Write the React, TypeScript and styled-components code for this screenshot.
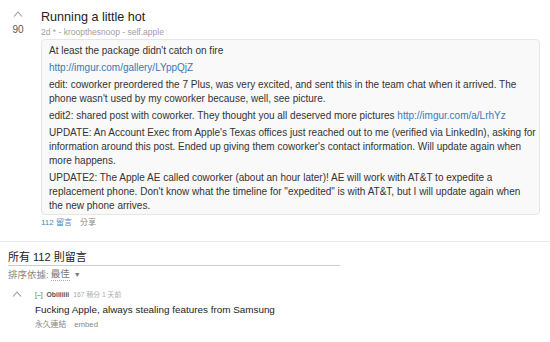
import React from "react";
import styled, { createGlobalStyle } from "styled-components";

const Global = createGlobalStyle`
  html, body { margin: 0; padding: 0; background: #fff; }
  body { font-family: "Liberation Sans", Arial, "Noto Sans CJK TC", sans-serif; color: #222; }
`;

const Page = styled.div`
  width: 550px;
  height: 342px;
  overflow: hidden;
  background: #fff;
`;

const Post = styled.div`
  display: grid;
  grid-template-columns: 24px 1fr;
  column-gap: 11px;
  padding: 9px 10px 0 6px;
`;

const Vote = styled.div`
  display: flex;
  flex-direction: column;
  align-items: center;
  padding-top: 2px;
`;

const Arrow = styled.svg`
  display: block;
  width: 10px;
  height: 6px;
`;

const Score = styled.div`
  font-size: 10px;
  color: #555;
  margin-top: 7px;
`;

const Content = styled.div`
  display: flex;
  flex-direction: column;
`;

const Title = styled.div`
  font-size: 12.6px;
  line-height: 16px;
  color: #222;
`;

const Meta = styled.div`
  font-size: 8.5px;
  line-height: 10px;
  color: #a0a0a0;
  margin-top: 2px;
`;

const Body = styled.div`
  margin-top: 2px;
  background: #f9f9f9;
  border: 1px solid #e6e6e6;
  border-radius: 4px;
  padding: 4px 2px 1px 7px;
`;

const P = styled.p`
  margin: 0 0 3px;
  font-size: 10px;
  line-height: 14px;
  color: #333;
  &:last-child { margin-bottom: 0; }
`;

const Link = styled.span`
  color: #3a78b8;
`;

const Actions = styled.div`
  display: flex;
  gap: 8px;
  margin-top: 2px;
  font-size: 8px;
  line-height: 12px;
  color: #888;
`;

const Blue = styled.span`
  color: #4a85c4;
`;

const Divider = styled.div`
  height: 1px;
  background: #e8e8e8;
  margin-top: 12px;
`;

const Comments = styled.div`
  padding: 0 0 0 8px;
`;

const Header = styled.div`
  width: 332px;
  margin-top: 8px;
  font-size: 11px;
  line-height: 14px;
  color: #222;
  border-bottom: 1px solid #ccc;
  padding-bottom: 1px;
`;

const Sort = styled.div`
  margin-top: 2px;
  font-size: 9.5px;
  line-height: 12px;
  color: #888;
  display: flex;
  align-items: center;
  gap: 2px;
`;

const SortValue = styled.span`
  color: #777;
  border-bottom: 1px dotted #aaa;
`;

const Caret = styled.span`
  font-size: 7px;
  color: #777;
  margin-left: 2px;
`;

const Comment = styled.div`
  display: grid;
  grid-template-columns: 18px 1fr;
  column-gap: 5px;
  margin-top: 9px;
  padding-left: 4px;
`;

const CVote = styled.div`
  padding-top: 1px;
`;

const CMeta = styled.div`
  font-size: 6.8px;
  line-height: 10px;
  color: #aaa;
  display: flex;
  gap: 4px;
`;

const Author = styled.span`
  color: #555;
  font-weight: bold;
`;

const Toggle = styled.span`
  color: #666;
`;

const CText = styled.div`
  font-size: 9.9px;
  line-height: 14px;
  color: #222;
  margin-top: 3px;
`;

const CActions = styled.div`
  display: flex;
  gap: 8px;
  font-size: 7.8px;
  line-height: 12px;
  color: #888;
  margin-top: 2px;
`;

const UpArrow = () => (
  <Arrow viewBox="0 0 10 6">
    <polyline points="1,5.5 5,1 9,5.5" fill="none" stroke="#9a9a9a" strokeWidth="1.1" />
  </Arrow>
);

export default function App() {
  return (
    <Page>
      <Global />
      <Post>
        <Vote>
          <UpArrow />
          <Score>90</Score>
        </Vote>
        <Content>
          <Title>Running a little hot</Title>
          <Meta>2d * - kroopthesnoop - self.apple</Meta>
          <Body>
            <P>At least the package didn't catch on fire</P>
            <P><Link>http://imgur.com/gallery/LYppQjZ</Link></P>
            <P>
              edit: coworker preordered the 7 Plus, was very excited, and sent this in the team chat when it arrived. The
              <br />
              phone wasn't used by my coworker because, well, see picture.
            </P>
            <P>
              edit2: shared post with coworker. They thought you all deserved more pictures{" "}
              <Link>http://imgur.com/a/LrhYz</Link>
            </P>
            <P>
              UPDATE: An Account Exec from Apple's Texas offices just reached out to me (verified via LinkedIn), asking for
              <br />
              information around this post. Ended up giving them coworker's contact information. Will update again when
              <br />
              more happens.
            </P>
            <P>
              UPDATE2: The Apple AE called coworker (about an hour later)! AE will work with AT&amp;T to expedite a
              <br />
              replacement phone. Don't know what the timeline for "expedited" is with AT&amp;T, but I will update again when
              <br />
              the new phone arrives.
            </P>
          </Body>
          <Actions>
            <Blue>112 留言</Blue>
            <span>分享</span>
          </Actions>
        </Content>
      </Post>
      <Divider />
      <Comments>
        <Header>所有 112 則留言</Header>
        <Sort>
          排序依據: <SortValue>最佳</SortValue>
          <Caret>▼</Caret>
        </Sort>
        <Comment>
          <CVote>
            <UpArrow />
          </CVote>
          <div>
            <CMeta>
              <Toggle>[–]</Toggle>
              <Author>Obiiiiiii</Author>
              <span>167 積分 1 天前</span>
            </CMeta>
            <CText>Fucking Apple, always stealing features from Samsung</CText>
            <CActions>
              <span>永久連結</span>
              <span>embed</span>
            </CActions>
          </div>
        </Comment>
      </Comments>
    </Page>
  );
}
